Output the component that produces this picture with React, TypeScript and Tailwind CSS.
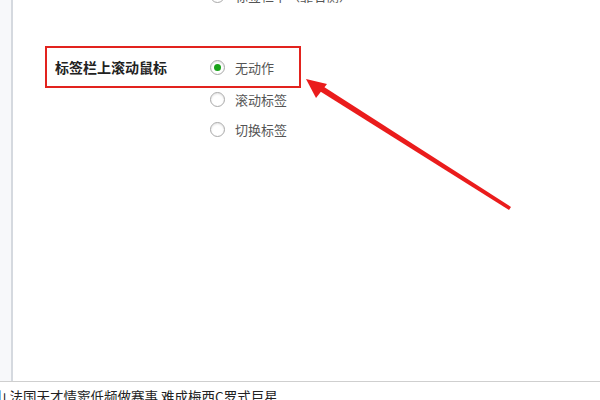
function Radio({ checked = false }: { checked?: boolean }) {
  return (
    <span className="flex h-[15px] w-[15px] shrink-0 items-center justify-center rounded-full border border-[#a9a9a9] bg-white shadow-[inset_0_1px_2px_rgba(0,0,0,0.12)]">
      {checked && <span className="h-[7px] w-[7px] rounded-full bg-[#18a218]" />}
    </span>
  );
}

function Option({ label, checked }: { label: string; checked?: boolean }) {
  return (
    <div className="flex items-center gap-[10px]">
      <Radio checked={checked} />
      <span className="text-[13px] leading-none text-[#555]">{label}</span>
    </div>
  );
}

export default function App() {
  return (
    <div
      className="relative flex h-[400px] w-[600px] flex-col overflow-hidden bg-white"
      style={{ fontFamily: '"Noto Sans CJK SC", "Noto Sans", sans-serif' }}
    >
      <div className="flex h-[382px] shrink-0 border-b border-[#cfcfcf]">
        <div className="w-[13px] shrink-0 border-r-2 border-[#d5d9df] bg-[#f7f8fa]" />
        <div className="flex flex-1 flex-col">
          <div className="mt-[-12px] pl-[197px]">
            <Option label="标签栏下（靠右侧）" />
          </div>
          <div className="mt-[43px] ml-[32px] flex h-[42px] w-[256px] items-center border-2 border-[#e2231e] pl-[8px]">
            <span className="w-[155px] text-[14px] font-bold leading-none text-[#222]">标签栏上滚动鼠标</span>
            <Option label="无动作" checked />
          </div>
          <div className="mt-[4px] flex flex-col gap-[15px] pl-[197px]">
            <Option label="滚动标签" />
            <Option label="切换标签" />
          </div>
        </div>
      </div>
      <div className="ml-[-7px] pt-[4px] text-[13.5px] leading-[20px] whitespace-nowrap text-[#222]">
        山 法国天才情窦低频做赛事 难成梅西C罗式巨星
      </div>
      <svg className="pointer-events-none absolute left-0 top-0" width="600" height="400">
        <polygon points="511,207 509,210 318,90 321,85" fill="#ea1c1c" />
        <polygon points="306,79 327,84 316,98" fill="#ea1c1c" />
      </svg>
    </div>
  );
}
